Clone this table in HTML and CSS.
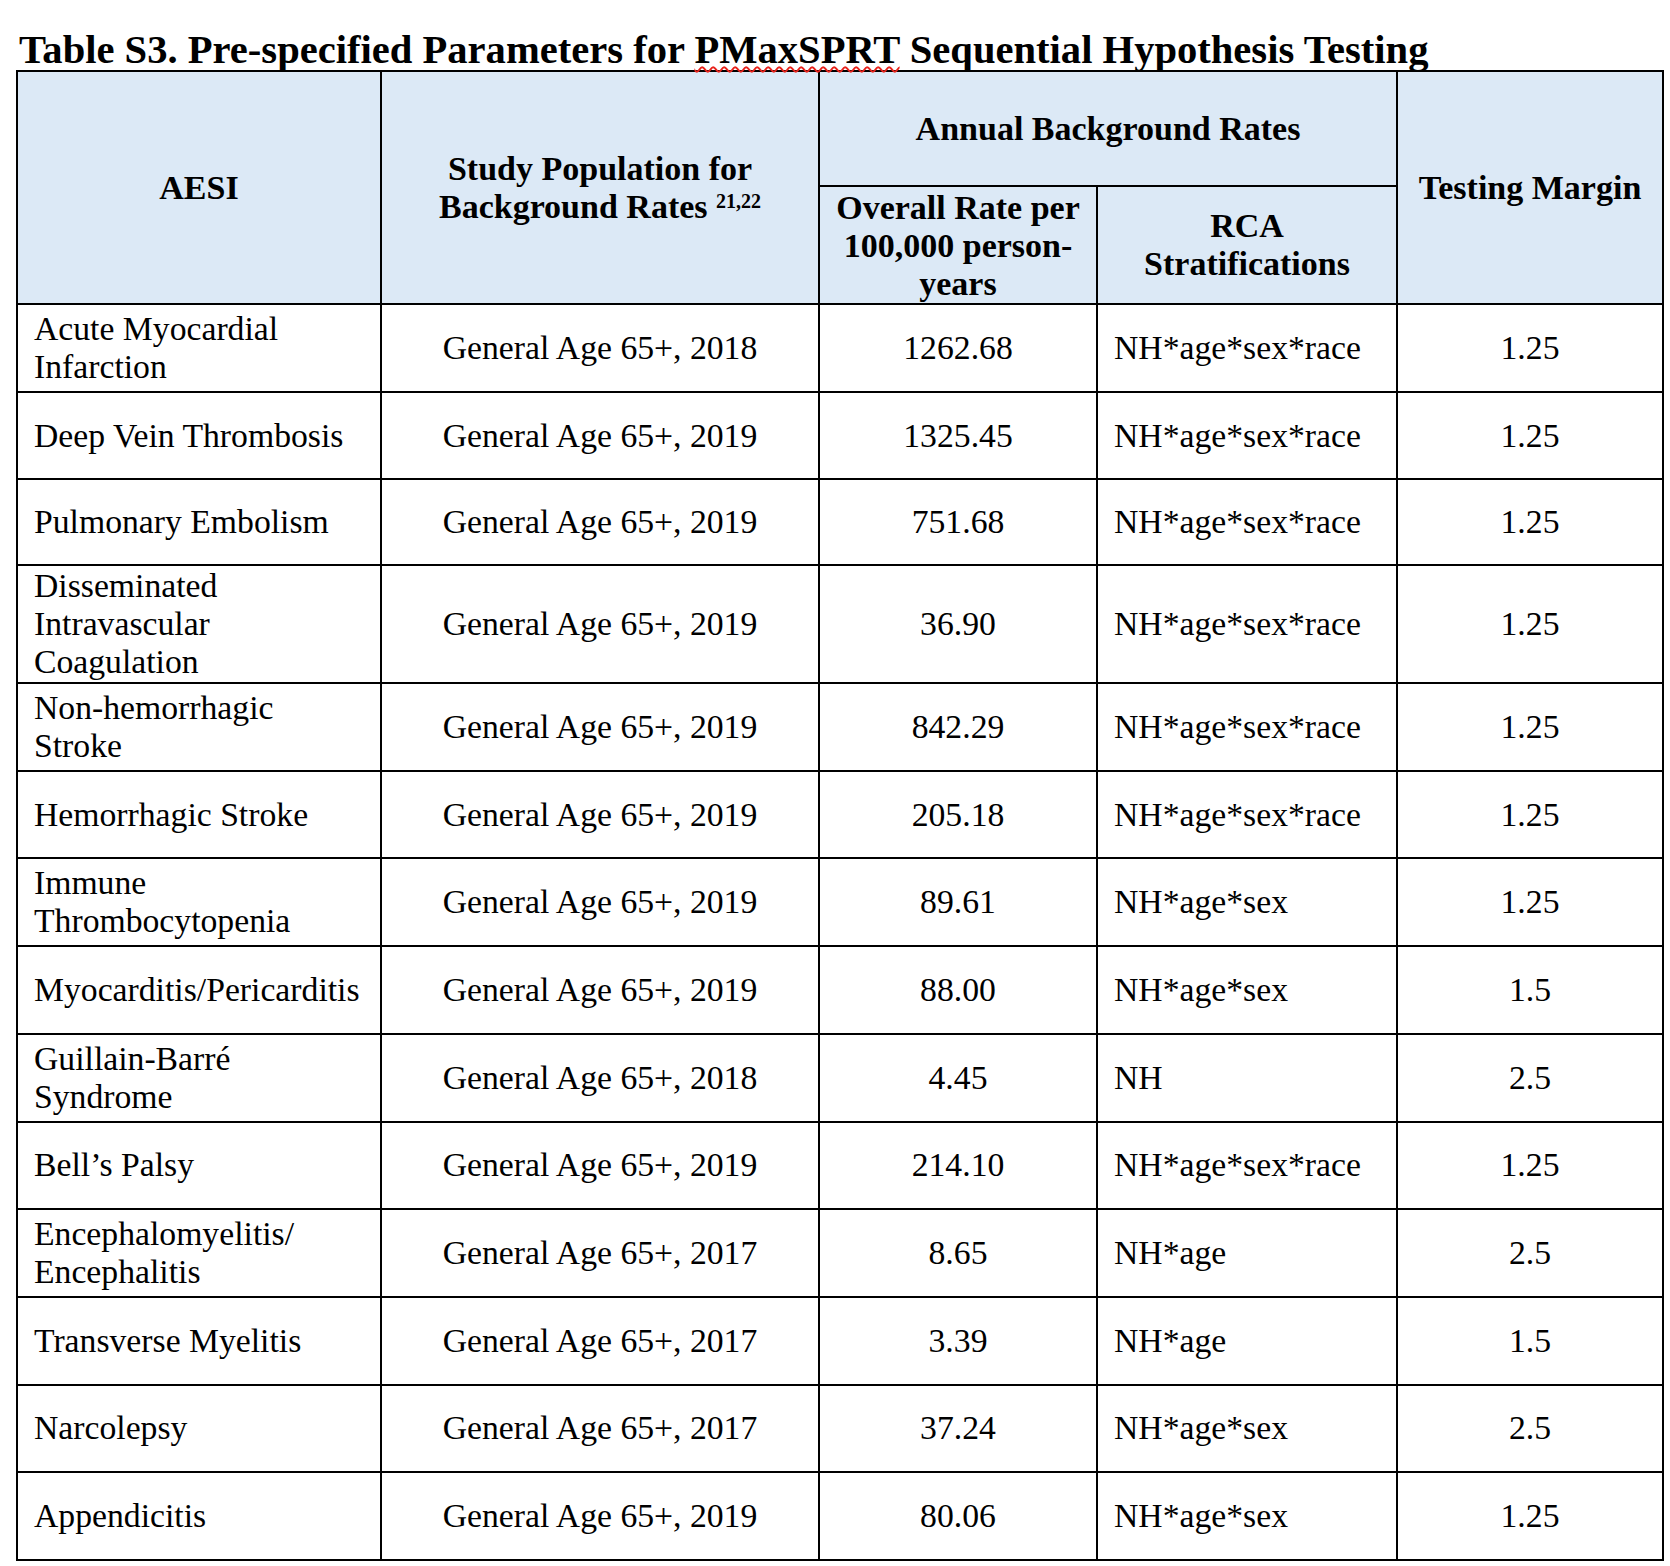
FILE: index.html
```html
<!DOCTYPE html>
<html lang="en">
<head>
<meta charset="utf-8">
<title>Table S3</title>
<link rel="stylesheet" href="styles.css">
</head>
<body>
<h1 class="title">Table S3. Pre-specified Parameters for <span class="spell">PMaxSPRT</span> Sequential Hypothesis Testing</h1>
<table class="params">
  <colgroup>
    <col class="c-aesi">
    <col class="c-pop">
    <col class="c-rate">
    <col class="c-rca">
    <col class="c-margin">
  </colgroup>
  <thead>
    <tr class="hr1">
      <th rowspan="2">AESI</th>
      <th rowspan="2">Study Population for<br>Background Rates <sup class="ref">21,22</sup></th>
      <th colspan="2">Annual Background Rates</th>
      <th rowspan="2">Testing Margin</th>
    </tr>
    <tr class="hr2">
      <th class="rate-head">Overall Rate per<br>100,000 person-<br>years</th>
      <th>RCA<br>Stratifications</th>
    </tr>
  </thead>
  <tbody>
    <tr><td class="name">Acute Myocardial<br>Infarction</td><td>General Age 65+, 2018</td><td>1262.68</td><td class="rca">NH*age*sex*race</td><td>1.25</td></tr>
    <tr><td class="name">Deep Vein Thrombosis</td><td>General Age 65+, 2019</td><td>1325.45</td><td class="rca">NH*age*sex*race</td><td>1.25</td></tr>
    <tr class="short"><td class="name">Pulmonary Embolism</td><td>General Age 65+, 2019</td><td>751.68</td><td class="rca">NH*age*sex*race</td><td>1.25</td></tr>
    <tr class="tall"><td class="name">Disseminated<br>Intravascular<br>Coagulation</td><td>General Age 65+, 2019</td><td>36.90</td><td class="rca">NH*age*sex*race</td><td>1.25</td></tr>
    <tr><td class="name">Non-hemorrhagic<br>Stroke</td><td>General Age 65+, 2019</td><td>842.29</td><td class="rca">NH*age*sex*race</td><td>1.25</td></tr>
    <tr><td class="name">Hemorrhagic Stroke</td><td>General Age 65+, 2019</td><td>205.18</td><td class="rca">NH*age*sex*race</td><td>1.25</td></tr>
    <tr><td class="name">Immune<br>Thrombocytopenia</td><td>General Age 65+, 2019</td><td>89.61</td><td class="rca">NH*age*sex</td><td>1.25</td></tr>
    <tr><td class="name">Myocarditis/Pericarditis</td><td>General Age 65+, 2019</td><td>88.00</td><td class="rca">NH*age*sex</td><td>1.5</td></tr>
    <tr><td class="name">Guillain-Barré<br>Syndrome</td><td>General Age 65+, 2018</td><td>4.45</td><td class="rca">NH</td><td>2.5</td></tr>
    <tr><td class="name">Bell’s Palsy</td><td>General Age 65+, 2019</td><td>214.10</td><td class="rca">NH*age*sex*race</td><td>1.25</td></tr>
    <tr><td class="name">Encephalomyelitis/<br>Encephalitis</td><td>General Age 65+, 2017</td><td>8.65</td><td class="rca">NH*age</td><td>2.5</td></tr>
    <tr><td class="name">Transverse Myelitis</td><td>General Age 65+, 2017</td><td>3.39</td><td class="rca">NH*age</td><td>1.5</td></tr>
    <tr><td class="name">Narcolepsy</td><td>General Age 65+, 2017</td><td>37.24</td><td class="rca">NH*age*sex</td><td>2.5</td></tr>
    <tr><td class="name">Appendicitis</td><td>General Age 65+, 2019</td><td>80.06</td><td class="rca">NH*age*sex</td><td>1.25</td></tr>
  </tbody>
</table>
</body>
</html>
```

FILE: styles.css
```css
html, body {
  margin: 0;
  background: #ffffff;
}

body {
  padding: 0 7px 0 15px;
  font-family: "Liberation Serif", "Times New Roman", serif;
  color: #000000;
}

.title {
  margin: 30px 0 0 4px;
  font-size: 40.6px;
  line-height: 40px;
  font-weight: bold;
  white-space: nowrap;
}

.spell {
  text-decoration: underline wavy #e8221b;
  text-decoration-thickness: 1.6px;
  text-underline-offset: 3px;
}

.params {
  border-collapse: collapse;
  table-layout: fixed;
  width: 1646px;
  margin-left: 1px;
  font-size: 33.7px;
  line-height: 38px;
}

.c-aesi { width: 364px; }
.c-pop { width: 438px; }
.c-rate { width: 278px; }
.c-rca { width: 300px; }
.c-margin { width: 266px; }

.params th,
.params td {
  border: 2px solid #000000;
  padding: 1px 16px;
  vertical-align: middle;
}

.params th {
  background: #dce9f6;
  font-size: 34px;
  font-weight: bold;
  text-align: center;
  padding: 0 6px;
}

.params td {
  text-align: center;
  white-space: nowrap;
}

.params td.name,
.params td.rca {
  text-align: left;
}

.hr1 { height: 115px; }
.hr2 { height: 114px; }

.params th.rate-head {
  vertical-align: top;
  padding-top: 2px;
  line-height: 38px;
}

.ref {
  font-size: 20px;
  line-height: 0;
  vertical-align: 10px;
}

.params tbody tr { height: 87.7px; }
.params tbody tr.short { height: 85.7px; }
.params tbody tr.tall { height: 118px; }
.params tbody tr.tall td.name { padding-top: 0; padding-bottom: 0; }
```
